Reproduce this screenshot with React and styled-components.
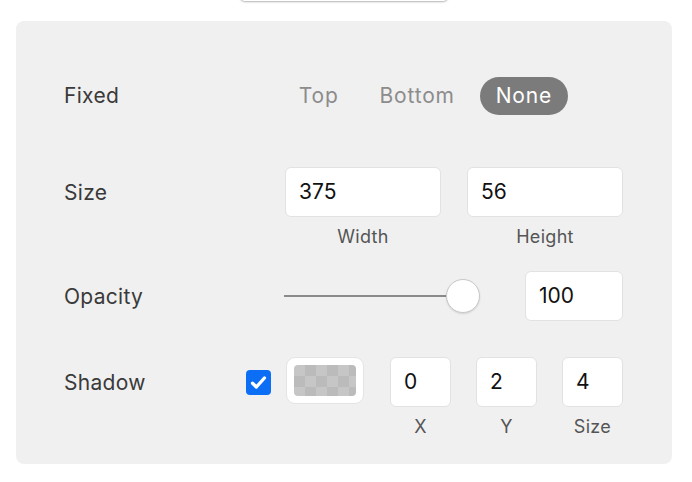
import styled, { createGlobalStyle } from 'styled-components';

const GlobalStyle = createGlobalStyle`
  body {
    margin: 0;
    background: #ffffff;
    font-family: Inter, "Noto Sans", sans-serif;
  }
`;

const Page = styled.div`
  width: 692px;
  height: 482px;
  overflow: hidden;
`;

const TopEdge = styled.div`
  width: 208px;
  height: 10px;
  margin: -9px 0 0 240px;
  background: #ffffff;
  border-radius: 8px;
  box-shadow: 0 1px 2px rgba(0, 0, 0, 0.3);
`;

const Panel = styled.div`
  box-sizing: border-box;
  width: 656px;
  height: 443px;
  margin: 20px 0 0 16px;
  padding: 56px 49px 0 48px;
  background: #f0f0f0;
  border-radius: 8px;
`;

const Row = styled.div`
  display: flex;
  align-items: flex-start;
  margin-top: ${(p) => p.$top || 0}px;
`;

const Label = styled.div`
  flex: 1;
  height: ${(p) => p.$h || 50}px;
  line-height: ${(p) => p.$h || 50}px;
  font-size: 21px;
  letter-spacing: 0.3px;
  color: #3a3a3a;
`;

const Segmented = styled.div`
  display: flex;
  gap: 9px;
  margin-right: 55px;
`;

const Segment = styled.div`
  height: 38px;
  line-height: 38px;
  padding: 0 16px;
  border-radius: 19px;
  font-size: 21px;
  letter-spacing: 0.8px;
  color: ${(p) => (p.$active ? '#ffffff' : '#8c8c8c')};
  background: ${(p) => (p.$active ? '#7b7b7b' : 'transparent')};
`;

const Fields = styled.div`
  display: flex;
  align-items: flex-start;
  gap: ${(p) => p.$gap || 26}px;
`;

const Field = styled.div`
  display: flex;
  flex-direction: column;
  align-items: center;
`;

const Input = styled.div`
  box-sizing: border-box;
  width: ${(p) => p.$w}px;
  height: 50px;
  padding-left: 13px;
  line-height: 48px;
  background: #ffffff;
  border: 1px solid #e2e2e2;
  border-radius: 6px;
  font-size: 21px;
  color: #111111;
`;

const Caption = styled.div`
  margin-top: 8px;
  font-size: 18px;
  letter-spacing: 0.3px;
  line-height: 24px;
  color: #555555;
`;

const Slider = styled.div`
  position: relative;
  width: 196px;
  height: 50px;
  margin-right: 45px;
`;

const Track = styled.div`
  position: absolute;
  left: 0;
  top: 24px;
  width: 180px;
  height: 2px;
  background: #8a8a8a;
`;

const Thumb = styled.div`
  position: absolute;
  right: 0;
  top: 8px;
  box-sizing: border-box;
  width: 34px;
  height: 34px;
  border-radius: 50%;
  background: #ffffff;
  border: 1px solid #c8c8c8;
  box-shadow: 0 1px 2px rgba(0, 0, 0, 0.12);
`;

const Check = styled.div`
  width: 25px;
  height: 25px;
  margin: 13px 15px 0 0;
  border-radius: 4px;
  background: #0b6ef5;
  display: flex;
  align-items: center;
  justify-content: center;
`;

const Swatch = styled.div`
  box-sizing: border-box;
  width: 78px;
  height: 47px;
  margin-right: 26px;
  padding: 7px;
  background: #ffffff;
  border: 1px solid #e4e4e4;
  border-radius: 9px;
`;

const Checker = styled.div`
  width: 100%;
  height: 100%;
  border-radius: 4px;
  background-color: #c6c6c6;
  background-image: linear-gradient(45deg, #bbbbbb 25%, transparent 25%, transparent 75%, #bbbbbb 75%),
    linear-gradient(45deg, #bbbbbb 25%, transparent 25%, transparent 75%, #bbbbbb 75%);
  background-size: 22px 22px;
  background-position: 0 0, 11px 11px;
`;

export default function App() {
  return (
    <Page>
      <GlobalStyle />
      <TopEdge />
      <Panel>
        <Row>
          <Label $h={38}>Fixed</Label>
          <Segmented>
            <Segment>Top</Segment>
            <Segment>Bottom</Segment>
            <Segment $active>None</Segment>
          </Segmented>
        </Row>

        <Row $top={52}>
          <Label $h={52}>Size</Label>
          <Fields>
            <Field>
              <Input $w={156}>375</Input>
              <Caption>Width</Caption>
            </Field>
            <Field>
              <Input $w={156}>56</Input>
              <Caption>Height</Caption>
            </Field>
          </Fields>
        </Row>

        <Row $top={22}>
          <Label $h={52}>Opacity</Label>
          <Slider>
            <Track />
            <Thumb />
          </Slider>
          <Input $w={98}>100</Input>
        </Row>

        <Row $top={34}>
          <Label $h={52}>Shadow</Label>
          <Check>
            <svg width="19" height="19" viewBox="0 0 16 16">
              <path d="M3 8.6l3.2 3.2L13 4.2" fill="none" stroke="#fff" strokeWidth="2.8" strokeLinecap="round" strokeLinejoin="round" />
            </svg>
          </Check>
          <Swatch>
            <Checker />
          </Swatch>
          <Fields $gap={25}>
            <Field>
              <Input $w={61}>0</Input>
              <Caption>X</Caption>
            </Field>
            <Field>
              <Input $w={61}>2</Input>
              <Caption>Y</Caption>
            </Field>
            <Field>
              <Input $w={61}>4</Input>
              <Caption>Size</Caption>
            </Field>
          </Fields>
        </Row>
      </Panel>
    </Page>
  );
}
